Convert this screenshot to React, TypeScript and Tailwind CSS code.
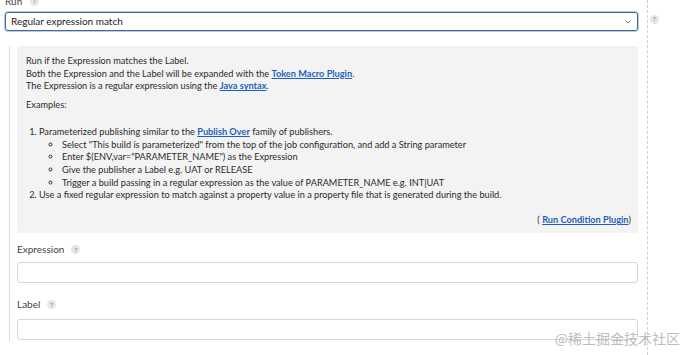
import React from 'react';

const HelpIcon = () => (
  <span className="inline-flex items-center justify-center w-[9px] h-[9px] rounded-full bg-[#e6e6e6] text-[6px] leading-none text-[#888] font-bold">
    ?
  </span>
);

const Link = ({ children }: { children: React.ReactNode }) => (
  <a className="font-bold text-[#1f5fbf] underline">{children}</a>
);

export default function App() {
  return (
    <div className="relative w-[692px] h-[355px] overflow-hidden bg-white text-[#333] font-['Lato','Noto_Sans',sans-serif] text-[9.2px]">
      <div className="flex h-full">
        <div className="w-[648px] border-r border-dashed border-[#cfcfcf] pl-[5px] pr-[9px]">
          <div className="flex items-center gap-[8px] h-[12px] -mt-[5px] text-[10px] text-[#444]">
            <span>Run</span>
            <HelpIcon />
          </div>
          <div className="mt-[5px] h-[19px] flex items-center justify-between rounded-[3px] border border-[#3d6a9a] shadow-[0_0_0_1px_#b9cde2] px-[5px] text-[10px] text-[#222]">
            <span>Regular expression match</span>
            <svg width="8" height="6" viewBox="0 0 8 6">
              <path d="M1.5 1.5 L4 4 L6.5 1.5" fill="none" stroke="#777" strokeWidth="1" />
            </svg>
          </div>
          <div className="ml-[4px] mt-[15px] border-l border-[#dcdcdc] pl-[7px] pb-[1px]">
            <div className="bg-[#f3f3f3] rounded-[2px] pl-[9px] pr-[7px] pt-[9px] pb-[6px] leading-[12.7px] text-[#2b2b2b]">
              <div>Run if the Expression matches the Label.</div>
              <div>
                Both the Expression and the Label will be expanded with the <Link>Token Macro Plugin</Link>.
              </div>
              <div>
                The Expression is a regular expression using the <Link>Java syntax</Link>.
              </div>
              <div className="mt-[6px]">Examples:</div>
              <ol className="mt-[14px] list-decimal pl-[13px]">
                <li>
                  Parameterized publishing similar to the <Link>Publish Over</Link> family of publishers.
                  <ul className="list-[circle] pl-[23px]">
                    <li>Select "This build is parameterized" from the top of the job configuration, and add a String parameter</li>
                    <li>Enter $(ENV,var="PARAMETER_NAME") as the Expression</li>
                    <li>Give the publisher a Label e.g. UAT or RELEASE</li>
                    <li>Trigger a build passing in a regular expression as the value of PARAMETER_NAME e.g. INT|UAT</li>
                  </ul>
                </li>
                <li>
                  Use a fixed regular expression to match against a property value in a property file that is generated during the build.
                </li>
              </ol>
              <div className="mt-[12px] text-right">
                ( <Link>Run Condition Plugin</Link>)
              </div>
            </div>
            <div className="mt-[11px] flex items-center gap-[7px] h-[12px] text-[10px] text-[#444]">
              <span>Expression</span>
              <HelpIcon />
            </div>
            <div className="mt-[6px] h-[21px] rounded-[3px] border border-[#d6d6d6] bg-white" />
            <div className="mt-[16px] flex items-center gap-[7px] h-[12px] text-[10px] text-[#444]">
              <span>Label</span>
              <HelpIcon />
            </div>
            <div className="mt-[8px] h-[21px] rounded-[3px] border border-[#d6d6d6] bg-white" />
          </div>
        </div>
        <div className="pl-[2px] pt-[11px]">
          <HelpIcon />
        </div>
      </div>
      <div className="absolute right-[12px] bottom-[6px] text-[14px] text-[#bdbdbd] font-['Noto_Sans_CJK_SC',sans-serif]">
        @稀土掘金技术社区
      </div>
    </div>
  );
}
